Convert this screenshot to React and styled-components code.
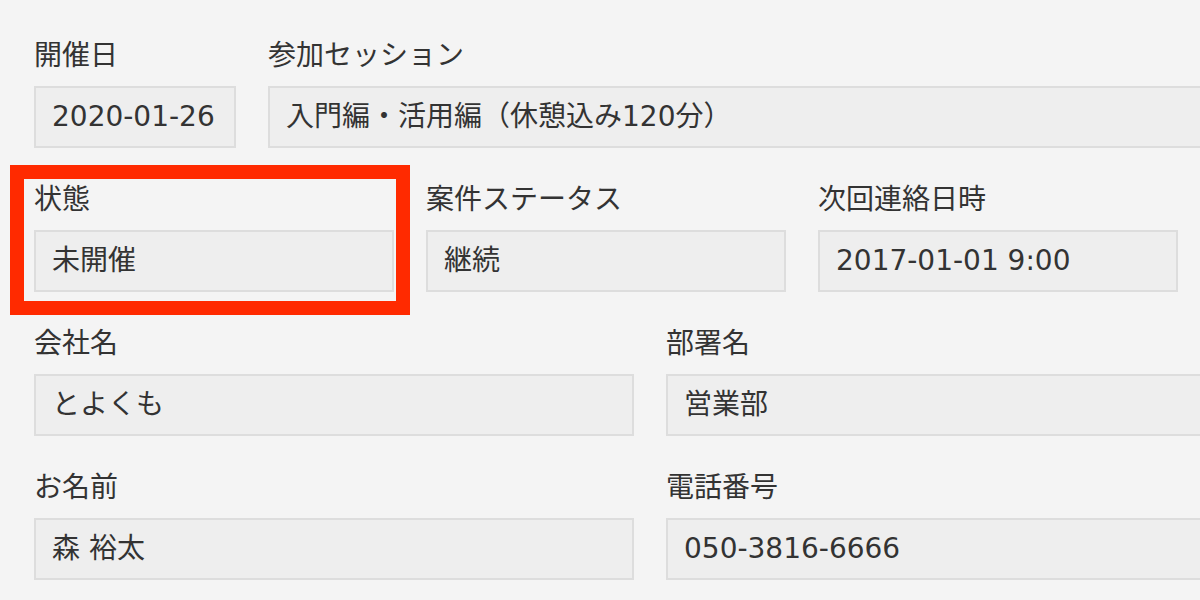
import React from "react";
import styled, { createGlobalStyle } from "styled-components";

const Global = createGlobalStyle`
  html, body {
    margin: 0;
    padding: 0;
    background: #f4f4f4;
    overflow: hidden;
  }
  body {
    font-family: "DejaVu Sans", "Noto Sans CJK JP", sans-serif;
    color: #333333;
  }
`;

const Page = styled.div`
  width: 1200px;
  height: 600px;
  box-sizing: border-box;
  padding: 36px 0 0 34px;
  display: flex;
  flex-direction: column;
  gap: 32px;
  overflow: hidden;
`;

const Row = styled.div`
  display: flex;
  gap: 32px;
`;

const Field = styled.div`
  position: relative;
  flex: none;
  width: ${(p) => p.$w}px;
  display: flex;
  flex-direction: column;
  gap: 10px;
`;

const Label = styled.div`
  font-size: 28px;
  line-height: 40px;
  height: 40px;
  white-space: nowrap;
  color: #333333;
`;

const Value = styled.div`
  box-sizing: border-box;
  height: 62px;
  padding: 0 16px;
  border: 2px solid #dddddd;
  background: #eeeeee;
  font-size: 28px;
  line-height: 58px;
  white-space: nowrap;
  color: #333333;
`;

const Highlight = styled.div`
  position: absolute;
  left: -24px;
  right: -16px;
  top: -15px;
  bottom: -23px;
  border: 14px solid #ff2a00;
  pointer-events: none;
`;

const rows = [
  [
    { label: "開催日", value: "2020-01-26", w: 202 },
    { label: "参加セッション", value: "入門編・活用編（休憩込み120分）", w: 1000 },
  ],
  [
    { label: "状態", value: "未開催", w: 360, mark: true },
    { label: "案件ステータス", value: "継続", w: 360 },
    { label: "次回連絡日時", value: "2017-01-01 9:00", w: 360 },
  ],
  [
    { label: "会社名", value: "とよくも", w: 600 },
    { label: "部署名", value: "営業部", w: 600 },
  ],
  [
    { label: "お名前", value: "森 裕太", w: 600 },
    { label: "電話番号", value: "050-3816-6666", w: 600 },
  ],
];

export default function App() {
  return (
    <>
      <Global />
      <Page>
        {rows.map((row, i) => (
          <Row key={i}>
            {row.map((f) => (
              <Field key={f.label} $w={f.w}>
                <Label>{f.label}</Label>
                <Value>{f.value}</Value>
                {f.mark && <Highlight />}
              </Field>
            ))}
          </Row>
        ))}
      </Page>
    </>
  );
}
